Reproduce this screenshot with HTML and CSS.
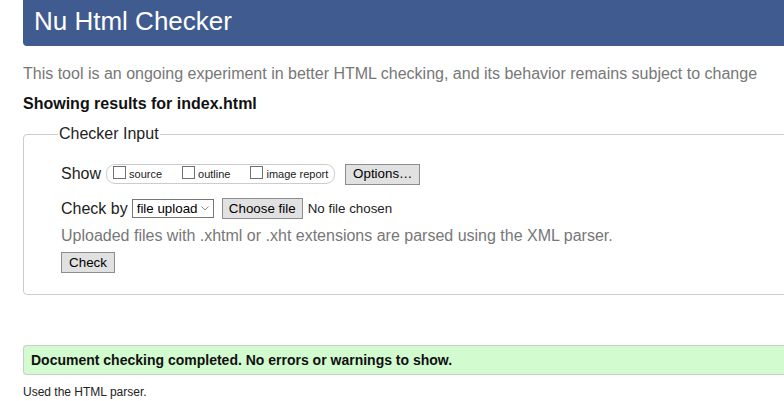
FILE: index.html
```html
<!DOCTYPE html>
<html lang="en">
<head>
<meta charset="utf-8">
<title>Nu Html Checker</title>
<link rel="stylesheet" href="styles.css">
</head>
<body>
<div class="page">
  <h1 class="title">Nu Html Checker</h1>
  <p class="intro">This tool is an ongoing experiment in better HTML checking, and its behavior remains subject to change</p>
  <p class="showing">Showing results for index.html</p>
  <fieldset class="input">
    <legend class="legend">Checker Input</legend>
    <div class="row row-show">
      <span class="label">Show</span>
      <span class="pill">
        <label class="opt"><input type="checkbox" class="cb"><span>source</span></label>
        <label class="opt"><input type="checkbox" class="cb"><span>outline</span></label>
        <label class="opt"><input type="checkbox" class="cb"><span>image report</span></label>
      </span>
      <button class="btn btn-options" type="button">Options…</button>
    </div>
    <div class="row row-check">
      <span class="label">Check by</span>
      <span class="select-wrap">
        <select class="select"><option>file upload</option></select>
        <svg class="chev" width="8" height="5" viewBox="0 0 8 5"><path d="M0.5 0.5 L4 4 L7.5 0.5" fill="none" stroke="#8a8a8a" stroke-width="1"/></svg>
      </span>
      <button class="btn btn-file" type="button">Choose file</button>
      <span class="nofile">No file chosen</span>
    </div>
    <p class="hint">Uploaded files with .xhtml or .xht extensions are parsed using the XML parser.</p>
    <button class="btn btn-check" type="button">Check</button>
  </fieldset>
  <div class="success">Document checking completed. No errors or warnings to show.</div>
  <p class="parser">Used the HTML parser.</p>
</div>
</body>
</html>
```
FILE: styles.css
```css
html, body {
  margin: 0;
  padding: 0;
  overflow: hidden;
  background: #fff;
}
body {
  font-family: "Liberation Sans", Arial, sans-serif;
  color: #222;
  padding-left: 23px;
}
.page {
  width: 1000px;
}
.title {
  margin: 0;
  background: #405b90;
  color: #fff;
  font-weight: normal;
  font-size: 26px;
  line-height: 30px;
  padding: 6px 11px 10px;
  border-radius: 0 0 4px 4px;
}
.intro {
  margin: 19px 0 0;
  font-size: 16px;
  line-height: 18px;
  color: #777;
}
.showing {
  margin: 12px 0 0;
  font-size: 16px;
  line-height: 18px;
  font-weight: bold;
  color: #111;
}
.input {
  margin: 12px 0 0;
  padding: 0 0 21px 37px;
  border: 1px solid #ccc;
  border-radius: 4px;
}
.legend {
  font-size: 16px;
  line-height: 18px;
  padding: 0 1px;
  margin-left: -3px;
  color: #222;
}
.row {
  display: flex;
  align-items: center;
  font-size: 16px;
}
.row-show {
  margin-top: 21px;
  height: 20px;
}
.row-check {
  margin-top: 14px;
  height: 21px;
}
.label {
  line-height: 18px;
}
.pill {
  display: inline-flex;
  align-items: flex-end;
  gap: 20px;
  height: 18px;
  margin-left: 5px;
  padding: 0 6px;
  border: 1px solid #ccc;
  border-radius: 9px;
  box-sizing: content-box;
}
.opt {
  display: inline-flex;
  align-items: flex-end;
  gap: 3px;
  font-size: 11px;
  line-height: 12px;
  color: #222;
  padding-bottom: 3px;
}
.cb {
  appearance: none;
  -webkit-appearance: none;
  width: 13px;
  height: 13px;
  margin: 0 0 1px;
  border: 1px solid #707070;
  background: #fff;
  box-sizing: border-box;
  flex: none;
}
.btn {
  font-family: "Liberation Sans", Arial, sans-serif;
  font-size: 13.333px;
  line-height: 16px;
  color: #000;
  background: #e1e1e1;
  border: 1px solid #8c8c8c;
  border-radius: 0;
  margin: 0;
  padding: 1px 6px;
  box-sizing: border-box;
}
.btn-options {
  margin-left: 10px;
  width: 75px;
  height: 21px;
}
.select-wrap {
  position: relative;
  display: inline-block;
  margin-left: 4px;
  height: 19px;
}
.select {
  appearance: none;
  -webkit-appearance: none;
  font-family: "Liberation Sans", Arial, sans-serif;
  font-size: 13.333px;
  line-height: 15px;
  color: #000;
  background: #fff;
  border: 1px solid #767676;
  border-radius: 0;
  width: 82px;
  height: 19px;
  margin: 0;
  padding: 0 0 0 4px;
  box-sizing: border-box;
  display: block;
}
.chev {
  position: absolute;
  right: 5px;
  top: 7px;
}
.btn-file {
  margin-left: 8px;
  width: 81px;
  height: 21px;
}
.nofile {
  margin-left: 5px;
  font-size: 13.333px;
  color: #222;
}
.hint {
  margin: 8px 0 0;
  font-size: 16px;
  line-height: 18px;
  color: #777;
}
.btn-check {
  display: block;
  margin-top: 7px;
  width: 54px;
  height: 21px;
}
.success {
  margin-top: 50px;
  background: #d3fbd0;
  border: 1px solid #ccc;
  border-right: 0;
  border-radius: 4px 0 0 4px;
  font-size: 14px;
  line-height: 28px;
  font-weight: bold;
  color: #111;
  padding-left: 7px;
}
.parser {
  margin: 10px 0 0;
  font-size: 12px;
  line-height: 14px;
  color: #222;
}
```
